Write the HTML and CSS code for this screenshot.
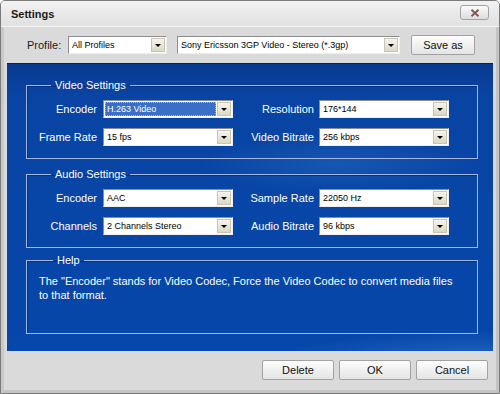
FILE: index.html
```html
<!DOCTYPE html>
<html lang="en">
<head>
    <meta charset="UTF-8">
    <title>Settings</title>
    <link rel="stylesheet" href="styles.css">
</head>
<body>
    <div class="window">
        <div class="titlebar">
            <span class="title">Settings</span>
            <span class="close">
                <svg width="10" height="8" viewBox="0 0 10 8"><path d="M1.5 0.8 L8.5 7.2 M8.5 0.8 L1.5 7.2" stroke="#865656" stroke-width="2"/></svg>
            </span>
        </div>

        <div class="toolbar">
            <span class="profile-label">Profile:</span>
            <div class="combo combo-profile"><span class="value">All Profiles</span><span class="arrow"></span></div>
            <div class="combo combo-format"><span class="value">Sony Ericsson 3GP Video - Stereo (*.3gp)</span><span class="arrow"></span></div>
            <button class="btn btn-save">Save as</button>
        </div>

        <div class="panel">
            <fieldset class="group">
                <legend>Video Settings</legend>
                <div class="grid">
                    <label>Encoder</label>
                    <div class="combo"><span class="value selected">H.263 Video</span><span class="arrow"></span></div>
                    <label>Resolution</label>
                    <div class="combo"><span class="value">176*144</span><span class="arrow"></span></div>
                    <label>Frame Rate</label>
                    <div class="combo"><span class="value">15 fps</span><span class="arrow"></span></div>
                    <label>Video Bitrate</label>
                    <div class="combo"><span class="value">256 kbps</span><span class="arrow"></span></div>
                </div>
            </fieldset>

            <fieldset class="group group-audio">
                <legend>Audio Settings</legend>
                <div class="grid">
                    <label>Encoder</label>
                    <div class="combo"><span class="value">AAC</span><span class="arrow"></span></div>
                    <label>Sample Rate</label>
                    <div class="combo"><span class="value">22050 Hz</span><span class="arrow"></span></div>
                    <label>Channels</label>
                    <div class="combo"><span class="value">2 Channels Stereo</span><span class="arrow"></span></div>
                    <label>Audio Bitrate</label>
                    <div class="combo"><span class="value">96 kbps</span><span class="arrow"></span></div>
                </div>
            </fieldset>

            <fieldset class="group group-help">
                <legend>Help</legend>
                <p class="help-text">The "Encoder" stands for Video Codec, Force the Video Codec to convert media files to that format.</p>
            </fieldset>
        </div>

        <div class="footer">
            <button class="btn">Delete</button>
            <button class="btn">OK</button>
            <button class="btn">Cancel</button>
        </div>
    </div>
</body>
</html>
```

FILE: styles.css
```css
body {
    margin: 0;
    font-family: "Liberation Sans", Arial, sans-serif;
    font-size: 11px;
    background-color: #ffffff;
}
.window {
    width: 500px;
    height: 394px;
    box-sizing: border-box;
    border: 1px solid #7a7a7a;
    border-radius: 5px 5px 0 0;
    background-color: #dadada;
    box-shadow: inset 3px 0 0 #c9c9c9, inset -3px 0 0 #c4c4c4, inset 0 -3px 0 #c4c4c4;
}
.titlebar {
    height: 25px;
    display: flex;
    align-items: center;
    justify-content: space-between;
    padding: 0 10px 0 10px;
    border-bottom: 1px solid #f6f6f6;
    border-radius: 4px 4px 0 0;
    background: linear-gradient(#f2f2f2, #e0e0e0);
}
.title {
    font-weight: bold;
    font-size: 11px;
    color: #1a1a1a;
}
.close {
    width: 27px;
    height: 13px;
    margin-top: -2px;
    display: flex;
    align-items: center;
    justify-content: center;
    border: 1px solid #a3a3a3;
    border-radius: 3px;
    background: linear-gradient(#fbfbfb, #dcdcdc);
}
.toolbar {
    height: 36px;
    display: flex;
    align-items: center;
    padding-left: 26px;
}
.profile-label {
    width: 41px;
    color: #1a1a1a;
}
.combo {
    height: 18px;
    box-sizing: border-box;
    display: flex;
    align-items: center;
    padding: 1px;
    border: 1px solid;
    border-color: #8d8d8d #efefef #efefef #8d8d8d;
    background-color: #ffffff;
    font-size: 9px;
    color: #000000;
}
.combo .value {
    flex: 1;
    height: 14px;
    line-height: 14px;
    padding-left: 2px;
    white-space: nowrap;
    overflow: hidden;
}
.combo .value.selected {
    background-color: #3a6fc8;
    color: #ffffff;
    outline: 1px dotted #c9b47a;
    outline-offset: -1px;
}
.combo .arrow {
    width: 14px;
    height: 14px;
    box-sizing: border-box;
    margin-left: 1px;
    border: 1px solid #c9c5b4;
    background: linear-gradient(#f7f5ec, #dcd8c6);
    position: relative;
}
.combo .arrow::after {
    content: "";
    position: absolute;
    left: 3px;
    top: 5px;
    border-left: 3px solid transparent;
    border-right: 3px solid transparent;
    border-top: 3px solid #000000;
}
.combo-profile {
    width: 99px;
    margin-right: 10px;
}
.combo-format {
    width: 223px;
    margin-right: 11px;
}
.btn {
    height: 20px;
    padding: 0;
    border: 1px solid #a2a2a2;
    border-radius: 2px;
    background: linear-gradient(#fdfdfd, #e4e4e4);
    font-family: "Liberation Sans", Arial, sans-serif;
    font-size: 11px;
    color: #111111;
}
.btn-save {
    width: 64px;
}
.panel {
    height: 288px;
    box-sizing: border-box;
    margin: 0 6px;
    padding: 14px 15px 0 19px;
    border-top: 1px solid #05215f;
    background:
        radial-gradient(ellipse 330px 55px at 480px 305px, rgba(100, 170, 240, 0.4), rgba(100, 170, 240, 0) 70%),
        radial-gradient(ellipse 200px 40px at 330px 100px, rgba(70, 140, 225, 0.25), rgba(70, 140, 225, 0) 70%),
        linear-gradient(#0a3a90 0, #0944a3 30px, #0647ab 100%);
}
.group {
    margin: 0;
    padding: 8px 0 12px 0;
    border: 1px solid #a4b8de;
    box-shadow: inset 1px 1px 0 #08307f;
}
.group legend {
    margin-left: 24px;
    padding: 0 4px;
    line-height: 14px;
    font-size: 11px;
    color: #ffffff;
}
.group-audio {
    margin-top: 8px;
}
.group-help {
    margin-top: 5px;
    padding: 7px 20px 31px 12px;
}
.group-help legend {
    margin-left: 14px;
}
.grid {
    display: grid;
    grid-template-columns: 76px 130px 86px 130px;
    row-gap: 10px;
}
.grid label {
    line-height: 18px;
    text-align: right;
    padding-right: 6px;
    color: #ffffff;
}
.grid label:nth-child(4n+3) {
    padding-right: 5px;
}
.help-text {
    margin: 0;
    line-height: 14px;
    color: #ffffff;
}
.footer {
    display: flex;
    justify-content: flex-end;
    gap: 5px;
    padding: 9px 11px 0 0;
}
.footer .btn {
    width: 72px;
}
```
